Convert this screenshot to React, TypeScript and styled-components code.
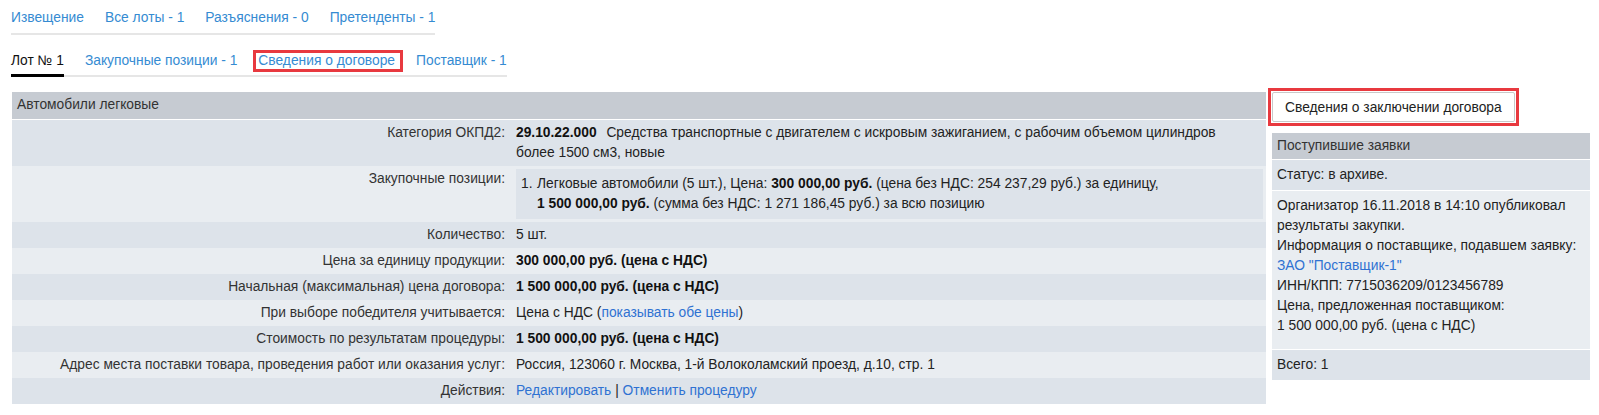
import React from "react";
import styled, { createGlobalStyle, css } from "styled-components";

const GlobalStyle = createGlobalStyle`
  html, body {
    margin: 0;
    padding: 0;
    background: #fff;
  }
  body {
    font-family: "Liberation Sans", Arial, sans-serif;
    font-size: 13.8px;
    color: #333;
  }
`;

const Page = styled.div`
  padding: 8px 9px 0 12px;
`;

const TabNav = styled.nav<{ $second?: boolean }>`
  display: flex;
  width: max-content;
  gap: 21px;
  margin-left: -1px;
  margin-top: ${(p) => (p.$second ? "16px" : "0")};
  border-bottom: 2px solid #e6e6e6;
  align-items: flex-start;
`;

const Tab = styled.a<{ $active?: boolean; $marked?: boolean; $second?: boolean }>`
  position: relative;
  display: block;
  line-height: 20px;
  padding-bottom: ${(p) => (p.$second ? "4px" : "5px")};
  color: #358bd2;
  text-decoration: none;
  cursor: pointer;
  ${(p) =>
    p.$active &&
    css`
      color: #111;
      padding-bottom: 3px;
      border-bottom: 3px solid #000;
      margin-bottom: -2px;
    `}
  ${(p) =>
    p.$marked &&
    css`
      &::after {
        content: "";
        position: absolute;
        top: -1px;
        bottom: 3px;
        left: -5px;
        right: -8px;
        border: 3px solid #e8393f;
      }
    `}
`;

const Content = styled.div`
  display: flex;
  align-items: flex-start;
  gap: 6px;
  margin-top: 15px;
`;

const MainTable = styled.section`
  flex: 1;
  min-width: 0;
  line-height: 20px;
`;

const TableHeader = styled.div`
  background: #c6cbd2;
  color: #333;
  padding: 3px 5px 4px;
  border-bottom: 1px solid #fff;
`;

const Row = styled.div<{ $alt?: boolean }>`
  display: grid;
  grid-template-columns: 500px 1fr;
  background: ${(p) => (p.$alt ? "#e9edf1" : "#dde3ea")};
`;

const Label = styled.div`
  text-align: right;
  padding: 3px 7px 3px 0;
  color: #333;
`;

const Value = styled.div`
  padding: 3px 3px 3px 4px;
  color: #222;
`;

const Strong = styled.b`
  color: #111;
  font-weight: bold;
`;

const Code = styled(Strong)`
  margin-right: 6px;
`;

const Link = styled.a`
  color: #2f72d2;
  text-decoration: none;
  cursor: pointer;
`;

const PositionBox = styled.div`
  background: #dde3ea;
  padding: 5px 6px 5px 5px;
  display: flex;
`;

const PositionNum = styled.span`
  width: 16px;
  flex: none;
`;

const Side = styled.aside`
  width: 318px;
  flex: none;
  display: flex;
  flex-direction: column;
  line-height: 20px;
`;

const ActionButton = styled.button`
  position: relative;
  align-self: flex-start;
  margin-top: 0;
  height: 30px;
  padding: 0 12px;
  background: #fff;
  border: 1px solid #c9c9c9;
  border-radius: 2px;
  font-family: "Liberation Sans", Arial, sans-serif;
  font-size: 13.8px;
  color: #222;
  cursor: pointer;
  &::after {
    content: "";
    position: absolute;
    inset: -5px;
    border: 3px solid #e8393f;
    pointer-events: none;
  }
`;

const Panel = styled.div`
  margin-top: 11px;
`;

const PanelHeader = styled.div`
  background: #c6cbd2;
  color: #333;
  padding: 3px 5px;
  border-bottom: 1px solid #fff;
`;

const PanelRow = styled.div<{ $alt?: boolean; $tall?: boolean }>`
  background: ${(p) => (p.$alt ? "#e9edf1" : "#dde3ea")};
  color: #222;
  padding: ${(p) => (p.$tall ? "5px 5px 13px" : "5px")};
  border-bottom: 1px solid #fff;
  &:last-child {
    border-bottom: none;
  }
`;

const rows: { label: string; value: React.ReactNode }[] = [
  { label: "Количество:", value: "5 шт." },
  {
    label: "Цена за единицу продукции:",
    value: <Strong>300 000,00 руб. (цена с НДС)</Strong>,
  },
  {
    label: "Начальная (максимальная) цена договора:",
    value: <Strong>1 500 000,00 руб. (цена с НДС)</Strong>,
  },
  {
    label: "При выборе победителя учитывается:",
    value: (
      <>
        Цена с НДС (<Link>показывать обе цены</Link>)
      </>
    ),
  },
  {
    label: "Стоимость по результатам процедуры:",
    value: <Strong>1 500 000,00 руб. (цена с НДС)</Strong>,
  },
  {
    label: "Адрес места поставки товара, проведения работ или оказания услуг:",
    value: "Россия, 123060 г. Москва, 1-й Волоколамский проезд, д.10, стр. 1",
  },
  {
    label: "Действия:",
    value: (
      <>
        <Link>Редактировать</Link> | <Link>Отменить процедуру</Link>
      </>
    ),
  },
];

export default function App() {
  return (
    <>
      <GlobalStyle />
      <Page>
        <TabNav>
          <Tab>Извещение</Tab>
          <Tab>Все лоты - 1</Tab>
          <Tab>Разъяснения - 0</Tab>
          <Tab>Претенденты - 1</Tab>
        </TabNav>
        <TabNav $second>
          <Tab $second $active>
            Лот № 1
          </Tab>
          <Tab $second>Закупочные позиции - 1</Tab>
          <Tab $second $marked>
            Сведения о договоре
          </Tab>
          <Tab $second>Поставщик - 1</Tab>
        </TabNav>

        <Content>
          <MainTable>
            <TableHeader>Автомобили легковые</TableHeader>
            <Row>
              <Label>Категория ОКПД2:</Label>
              <Value>
                <Code>29.10.22.000</Code> Средства транспортные с двигателем с
                искровым зажиганием, с рабочим объемом цилиндров
                <br />
                более 1500 см3, новые
              </Value>
            </Row>
            <Row $alt>
              <Label>Закупочные позиции:</Label>
              <Value>
                <PositionBox>
                  <PositionNum>1.</PositionNum>
                  <div>
                    Легковые автомобили (5 шт.), Цена:{" "}
                    <Strong>300 000,00 руб.</Strong> (цена без НДС: 254 237,29
                    руб.) за единицу,
                    <br />
                    <Strong>1 500 000,00 руб.</Strong> (сумма без НДС: 1 271
                    186,45 руб.) за всю позицию
                  </div>
                </PositionBox>
              </Value>
            </Row>
            {rows.map((r, i) => (
              <Row key={r.label} $alt={i % 2 === 1}>
                <Label>{r.label}</Label>
                <Value>{r.value}</Value>
              </Row>
            ))}
          </MainTable>

          <Side>
            <ActionButton>Сведения о заключении договора</ActionButton>
            <Panel>
              <PanelHeader>Поступившие заявки</PanelHeader>
              <PanelRow>Статус: в архиве.</PanelRow>
              <PanelRow $alt $tall>
                Организатор 16.11.2018 в 14:10 опубликовал результаты закупки.
                <br />
                Информация о поставщике, подавшем заявку:
                <br />
                <Link>ЗАО "Поставщик-1"</Link>
                <br />
                ИНН/КПП: 7715036209/0123456789
                <br />
                Цена, предложенная поставщиком:
                <br />1 500 000,00 руб. (цена с НДС)
              </PanelRow>
              <PanelRow>Всего: 1</PanelRow>
            </Panel>
          </Side>
        </Content>
      </Page>
    </>
  );
}
